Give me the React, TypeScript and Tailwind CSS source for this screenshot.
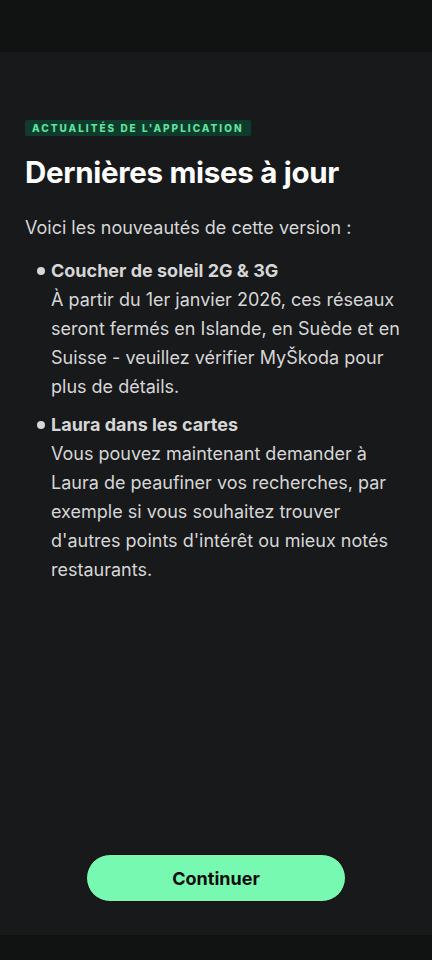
const body = "font-['Inter','Liberation_Sans',sans-serif]";

interface UpdateProps {
	title: string;
	text: string;
}
function UpdateItem({ title, text }: UpdateProps) {
	return (
		<li className="flex gap-[6px]">
			<span className="mt-[11px] h-[8px] w-[8px] shrink-0 rounded-full bg-[#d6d6d6] ml-[12px]" />
			<div className="text-[18px] leading-[29px] text-[#d6d6d6]">
				<p className="font-bold">{title}</p>
				<p>{text}</p>
			</div>
		</li>
	);
}

export default function App() {
	return (
		<div className={`flex h-[960px] w-[432px] flex-col bg-[#18191b] ${body}`}>
			<div className="h-[52px] bg-[#111313]" />

			<div className="flex flex-1 flex-col px-[25px] pt-[68px]">
				<span className="self-start rounded-[2px] bg-[#0f3b2c] px-[7px] py-[3px] text-[10px] font-extrabold leading-[10px] tracking-[0.2em] text-[#5fe39c]">
					ACTUALITÉS DE L'APPLICATION
				</span>

				<h1 className="mt-[18px] text-[29.5px] font-bold leading-[36px] tracking-[-0.01em] text-white">
					Dernières mises à jour
				</h1>

				<p className="mt-[23px] text-[18px] leading-[29px] text-[#d6d6d6]">
					Voici les nouveautés de cette version :
				</p>

				<ul className="mt-[14px] flex flex-col gap-[9px]">
					<UpdateItem
						title="Coucher de soleil 2G & 3G"
						text="À partir du 1er janvier 2026, ces réseaux seront fermés en Islande, en Suède et en Suisse - veuillez vérifier MyŠkoda pour plus de détails."
					/>
					<UpdateItem
						title="Laura dans les cartes"
						text="Vous pouvez maintenant demander à Laura de peaufiner vos recherches, par exemple si vous souhaitez trouver d'autres points d'intérêt ou mieux notés restaurants."
					/>
				</ul>

				<div className="mt-auto flex justify-center pb-[33px]">
					<button className="h-[48px] w-[260px] rounded-full border border-[#0d0f0e] bg-[#78f9b2] text-[18px] font-bold text-[#0b0c0c]">
						Continuer
					</button>
				</div>
			</div>

			<div className="h-[25px] bg-[#111313]" />
		</div>
	);
}
